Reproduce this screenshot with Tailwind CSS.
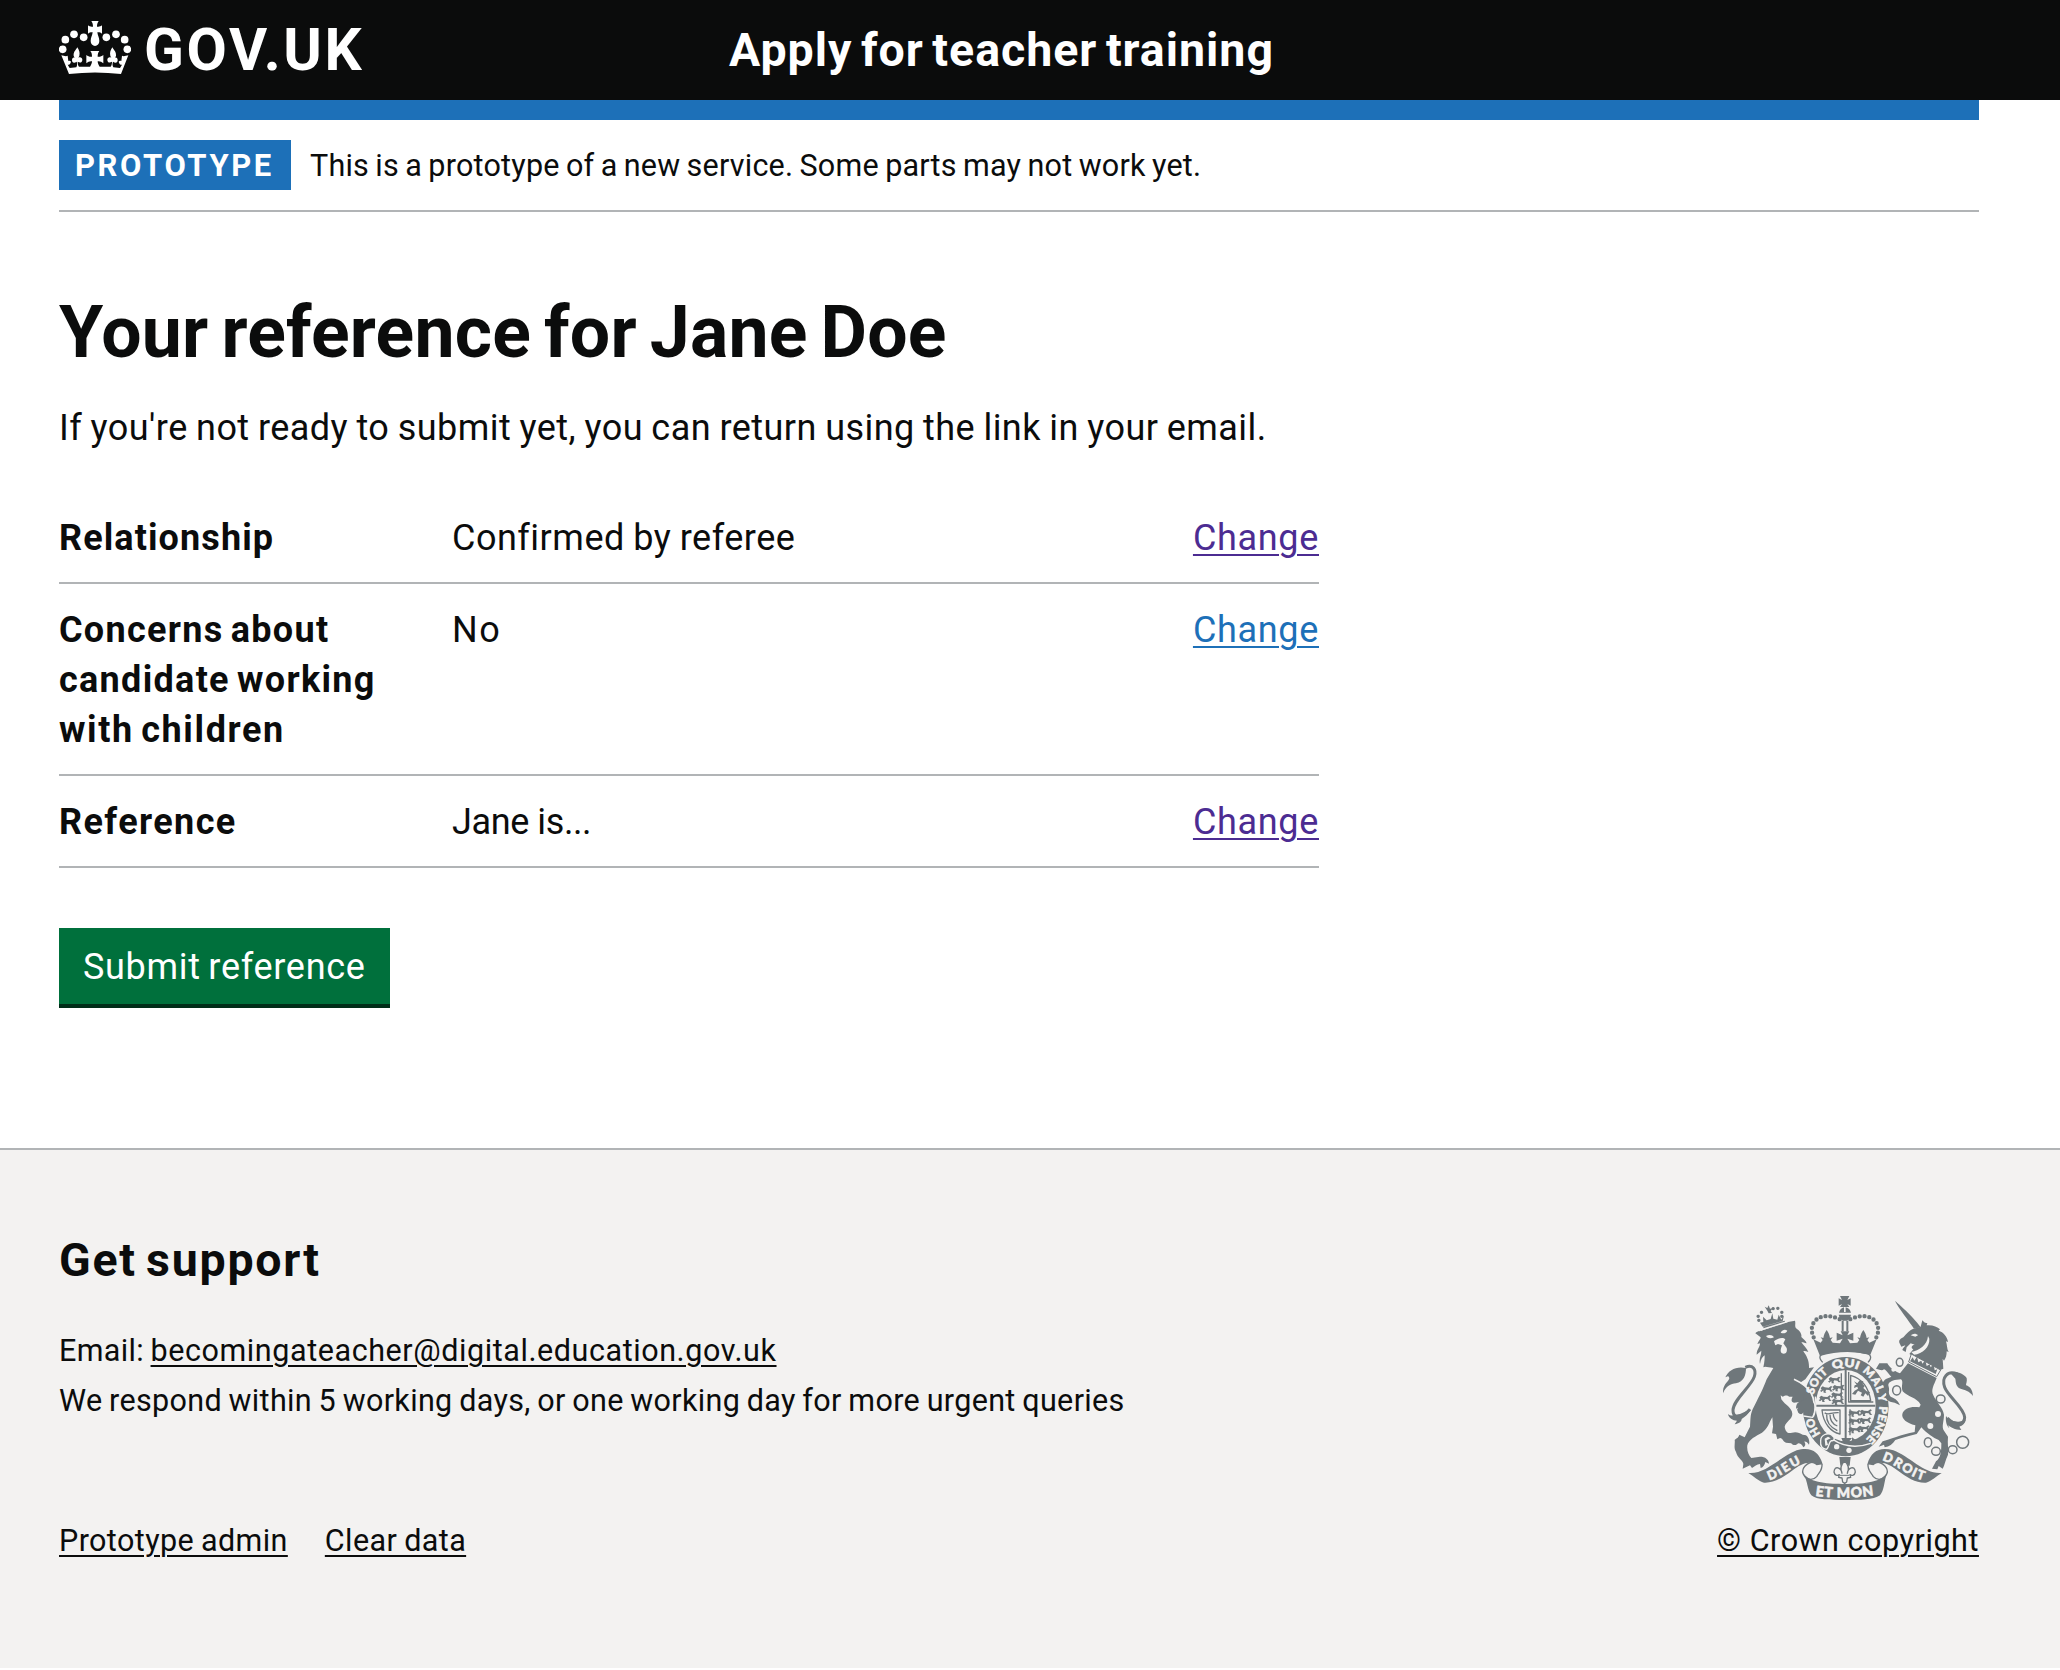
<!DOCTYPE html>
<html lang="en">
<head>
<meta charset="utf-8">
<title>Your reference for Jane Doe</title>
<script src="https://cdn.jsdelivr.net/npm/@tailwindcss/browser@4"></script>
</head>
<body class="bg-white text-[#0b0c0c] font-['Roboto',sans-serif] text-[36px] leading-[50px] min-h-[1670px] overflow-x-hidden">

<header class="bg-[#0b0c0c] text-white h-[100px] pl-[59px] flex">
  <a class="flex w-[670px] h-[100px]">
    <svg class="w-[72px] h-[54px] mt-[20px]" viewBox="57 60 216 162" fill="#fff">
      <circle cx="68" cy="148" r="11.5"/><circle cx="76" cy="119" r="11.5"/><circle cx="102" cy="103" r="11.5"/><circle cx="131" cy="112" r="11.5"/>
      <circle cx="199" cy="112" r="11.5"/><circle cx="228" cy="103" r="11.5"/><circle cx="254" cy="119" r="11.5"/><circle cx="262" cy="148" r="11.5"/>
      <path d="M154 63h22c-4 6-5 11-5 17 6 1 10 0 15-4v25c-5-4-9-5-14-4 1 10 6 16 6 26a13 15 0 0 1-26 0c0-10 5-16 6-26-5-1-9 0-14 4V76c5 4 9 5 15 4 0-6-1-11-5-17z"/>
      <path d="M65 166l14 3 5-2 2 16c4-2 6-1 8 2-2 8-7 10-10 9l6 10 20-2c3-6 3-11 1-17-8 6-14 3-14-5 0-6 4-9 8-7l-3-5c-1-12 5-16 11-26 6 10 8 15 6 26l-3 5c6-3 12 0 12 6 0 8-6 11-14 6 0 6 1 11 4 15h33c4-6 6-11 6-16-6-1-12 1-17 6v-25c5 4 11 6 17 5 0-7-1-12-5-17h27c-4 5-5 10-5 17 6 1 12-1 17-5v25c-5-5-11-7-17-6 0 5 2 10 6 16h33c3-4 4-9 4-15-8 5-14 2-14-6 0-6 6-9 12-6l-3-5c-2-11 0-16 6-26 6 10 12 14 11 26l-3 5c4-2 8 1 8 7 0 8-6 11-14 5-2 6-2 11 1 17l20 2 6-10c-3 1-8-1-10-9 2-3 4-4 8-2l2-16 5 2 14-3-22 56q-78-9-156 0z" transform="translate(-1 0)"/>
    </svg>
    <span class="text-[58.5px] font-bold leading-[100px] tracking-[2.7px] ml-[13px]">GOV.UK</span>
  </a>
  <span class="text-[46.5px] font-bold leading-[100px] tracking-[0.98px] [word-spacing:-4px] whitespace-nowrap">Apply for teacher training</span>
</header>

<div class="mx-[59px] w-[1920px]">
  <div class="h-[20px] bg-[#1d70b8]"></div>
  <div class="flex pt-[20px] pb-[20px] border-b-2 border-[#b1b4b6]">
    <strong class="bg-[#1d70b8] text-white w-[232px] h-[50px] pl-[16px] text-[31px] leading-[52px] font-bold tracking-[2.6px]">PROTOTYPE</strong>
    <span class="ml-[19px] h-[50px] leading-[52px] text-[30.5px] tracking-[0.22px] [word-spacing:-1.5px]">This is a prototype of a new service. Some parts may not work yet.</span>
  </div>

  <main class="w-[1260px] pt-[71px] h-[936px]">
    <h1 class="text-[71.5px] leading-[100px] font-bold tracking-[0.22px] [word-spacing:-5px] whitespace-nowrap">Your reference for Jane Doe</h1>
    <p class="mt-[20px] tracking-[0.45px] [word-spacing:-1px] whitespace-nowrap">If you're not ready to submit yet, you can return using the link in your email.</p>
    <dl class="mt-[39px]">
      <div class="flex pt-[21px] pb-[19px] border-b-2 border-[#b1b4b6]">
        <dt class="w-[393px] font-bold tracking-[1.1px]">Relationship</dt>
        <dd class="flex-1 tracking-[0.5px] [word-spacing:-1px]">Confirmed by referee</dd>
        <dd><a class="text-[#4c2c92] tracking-[0.67px] underline decoration-2 underline-offset-[4px]">Change</a></dd>
      </div>
      <div class="flex pt-[21px] pb-[19px] border-b-2 border-[#b1b4b6]">
        <dt class="w-[393px] font-bold tracking-[1.3px] [word-spacing:-3px]">Concerns about<br>candidate working<br><span class="tracking-[1.6px]">with children</span></dt>
        <dd class="flex-1 tracking-[1.5px]">No</dd>
        <dd><a class="text-[#1d70b8] tracking-[0.67px] underline decoration-2 underline-offset-[4px]">Change</a></dd>
      </div>
      <div class="flex pt-[21px] pb-[19px] border-b-2 border-[#b1b4b6]">
        <dt class="w-[393px] font-bold tracking-[1.4px]">Reference</dt>
        <dd class="flex-1 tracking-[-0.4px]">Jane is...</dd>
        <dd><a class="text-[#4c2c92] tracking-[0.67px] underline decoration-2 underline-offset-[4px]">Change</a></dd>
      </div>
    </dl>
    <button class="mt-[60px] block w-[331px] h-[80px] bg-[#00703c] border-b-4 border-[#002d18] text-white text-left pl-[24px] pt-[2px] leading-[74px] tracking-[0.7px] [word-spacing:-2px] whitespace-nowrap">Submit reference</button>
  </main>
</div>

<footer class="bg-[#f3f2f1] border-t-2 border-[#b1b4b6] h-[520px] text-[30.5px]">
  <div class="mx-[59px] w-[1920px] pt-[80px] flex justify-between">
    <div>
      <h2 class="text-[46.5px] leading-[60px] font-bold tracking-[1.75px] [word-spacing:-4px]">Get support</h2>
      <p class="mt-[36px] tracking-[0.34px] [word-spacing:-1.3px]">Email: <a class="tracking-[0.58px] underline decoration-2 underline-offset-[4px]">becomingateacher@digital.education.gov.uk</a><br>We respond within 5 working days, or one working day for more urgent queries</p>
      <div class="mt-[90px] flex gap-[37px]">
        <a class="tracking-[0.4px] [word-spacing:-1px] underline decoration-2 underline-offset-[4px]">Prototype admin</a>
        <a class="tracking-[0.4px] [word-spacing:-1px] underline decoration-2 underline-offset-[4px]">Clear data</a>
      </div>
    </div>
    <div class="pt-[65px] flex flex-col items-center w-[262px]">
      <svg class="w-[250px] h-[206px]" viewBox="69 45 750 618" fill="#6f777b" stroke-linejoin="round">
        <defs>
          <path id="garter" d="M437 501A101 120 0 0 1 437 261A101 120 0 0 1 437 501"/>
          <path id="dieu" d="M208 601C246 589 272 562 316 545"/>
          <path id="droit" d="M546 541C590 552 620 590 676 602"/>
          <path id="etmon" d="M346 647Q435 660 528 645"/>
          <g id="leopard"><path d="M0 6l6-5 6 3 12 1 7-5 5 3-5 3 1 6 5 4-7 1-4-5-9-1-3 5 3 4-8 0-1-7-6 5-4-4 5-2z"/></g>
        </defs>

        <!-- lion: tail, body, crown -->
        <path d="M136 262C158 252 170 268 163 290C153 320 101 358 99 390C98 414 122 420 150 388" fill="none" stroke="#6f777b" stroke-width="9"/>
        <path d="M69 340C67 312 88 304 88 294C84 284 80 292 76 292C86 270 108 258 138 264C138 285 132 305 108 310C92 312 78 318 69 340z"/>
        <path d="M84 402C96 412 110 402 120 402L152 388C146 402 134 412 125 417C125 426 116 430 104 433L111 422C98 422 86 414 84 402z"/>
        <path d="M166 160C174 150 182 156 190 150L264 126L285 122C288 132 282 140 290 146C300 152 306 162 304 171C310 178 318 182 320 190C312 188 306 186 304 187C312 198 320 204 325 216C318 213 312 212 310 214C320 228 328 242 327 264L342 262L316 298L300 308C312 316 328 328 334 342C346 362 346 388 339 407C331 402 330 394 326 392C328 400 324 406 316 404L314 392L306 402C298 402 294 396 292 388L300 380L288 386C288 374 292 368 298 366L282 368C272 366 274 356 278 350L268 350C260 344 256 346 248 350L242 346L244 358C256 376 276 382 277 402C277 418 258 424 254 440C256 454 262 462 276 458C288 454 298 458 308 464L318 466C326 472 330 484 327 494C322 488 318 484 313 485C318 492 316 498 310 502C306 494 302 490 294 490C290 498 276 496 274 490L258 488C246 482 250 476 240 474L232 478L228 462L216 460L219 440L217 412C206 430 204 446 186 458C168 468 146 478 142 496C140 514 146 526 154 534L180 530C196 530 206 538 207 551L196 546C194 554 190 562 182 564L180 552C170 552 164 560 156 564L150 556L128 566L130 552C130 542 112 534 108 516C100 504 106 490 104 480C108 474 114 476 118 464L134 472L150 440C152 420 150 406 158 388C172 360 190 326 200 298L220 264C204 262 196 258 190 262C194 246 194 234 194 226C188 230 182 238 180 252C176 236 184 226 184 212L170 224C170 208 180 202 180 190L172 192C176 182 182 178 182 172z"/>
        <path d="M190 140L254 122L256 130L191 148zM176 116a5 5 0 1 0 1 0zM174 104a5 5 0 1 0 1 0zM184 92a5 5 0 1 0 1 0zM219 81a5 5 0 1 0 1 0zM233 80a5 5 0 1 0 1 0zM245 92a5 5 0 1 0 1 0zM245 104a5 5 0 1 0 1 0zM180 128l8 12 60-17 4-16-8 12-8-15-4 15-12-3-3-16-5 17-12 4-11-11 1 16z"/>
        <path d="M194 80l8 4 4-8 4 10 8-1-6 8 4 6-10 1-4-8z"/>
        <path fill="#f3f2f1" d="M198 168C208 164 216 164 222 172C212 176 204 176 198 168zM242 158C248 148 256 148 262 152C258 160 250 162 242 158zM222 184C232 176 248 170 256 178L250 190L260 204C264 220 252 224 246 220C238 214 244 204 246 196L234 192L226 196zM185 146L262 123L263 127L187 151z"/>

        <!-- central crown -->
        <path d="M420 48h28l-6 12 10-5v22l-10-5 6 9h-28l6-9-10 5V55l10 5zM417 98C420 88 424 84 432 82V96h5V82C446 84 450 88 453 98zM416 104h37C451 118 444 122 435 122S419 118 416 104zM425 122h6v32h-6zM439 122h6v32h-6z"/>
        <path fill="none" stroke="#6f777b" stroke-width="13" stroke-linecap="round" stroke-dasharray="0 14.6" d="M341 172C320 128 360 90 420 118M529 172C550 128 510 90 450 118"/>
        <path transform="translate(-10 0)" d="M350 178l22 10 6-8-6-8 8 2c2-10 4-16 10-24 6 8 8 14 10 24l8-2-6 8 6 8 22 2 8-14-18 6v-24l18 8-6-12h26l-6 12 18-8v24l-18-6 8 14 22-2 6-8-6-8 8 2c2-10 4-16 10-24 6 8 8 14 10 24l8-2-6 8 6 8 22-10-19 46Q445 206 370 228z"/>
        <path fill="none" stroke="#6f777b" stroke-width="4" d="M368 247C352 230 362 222 374 220Q435 205 496 220C512 222 518 232 504 247"/>

        <!-- garter and quartered shield -->
        <ellipse cx="437" cy="380" rx="129" ry="149"/>
        <path fill="none" stroke="#f3f2f1" stroke-width="5" d="M282 298C330 320 352 350 340 410"/>
        <ellipse cx="437" cy="377" rx="90" ry="107" fill="#f3f2f1"/>
        <path d="M434 270h6v210h-6zM347 374h179v6H347z"/>
        <g fill="none" stroke="#6f777b" stroke-width="4">
          <path d="M446 276V366H520M452 286C486 296 506 322 512 362H452z"/>
          <path d="M366 390H420V462C392 456 370 430 366 390zM374 398C384 408 394 396 416 398M380 404C378 430 396 444 412 452M390 404C390 424 402 434 412 438M400 402C400 416 406 420 412 424"/>
          <path d="M424 280V366M450 388V466"/>
        </g>
        <path d="M462 304l10 6 6-8 12 2-2 8 6 6-4 6 10 10 10 2-6 12-8-8-6 10-8-4 4-8-12-6-8 12-10-2 8-10 10-6-2-6-10 4 2-8 6-2z"/>
        <use href="#leopard" x="386" y="290"/><use href="#leopard" x="362" y="318"/><use href="#leopard" x="398" y="314"/><use href="#leopard" x="358" y="346"/><use href="#leopard" x="394" y="336"/><use href="#leopard" x="396" y="355"/>
        <use href="#leopard" x="446" y="390"/><use href="#leopard" x="480" y="388"/><use href="#leopard" x="446" y="414"/><use href="#leopard" x="478" y="412"/><use href="#leopard" x="446" y="440"/><use href="#leopard" x="474" y="436"/>
        <path d="M424 474h32l-12 14h-14zM456 472l14 10-14 12z"/>
        <path fill="none" stroke="#f3f2f1" stroke-width="4" d="M398 478Q450 512 512 490"/>
        <path d="M362 482C362 464 384 456 396 466C408 474 402 484 394 482C386 486 388 500 380 508C368 508 360 500 362 482z" stroke="#f3f2f1" stroke-width="4"/>
        <path fill="#f3f2f1" d="M374 476l10-6 8 5-12 6 4 14-8 2z"/>
        <circle cx="410" cy="500" r="8" fill="#f3f2f1"/><circle cx="447" cy="511" r="8" fill="#f3f2f1"/>
        <g fill="#f3f2f1" stroke="#f3f2f1" stroke-width="1.6" font-family="Lato" font-weight="900" font-size="34">
          <text><textPath href="#garter" startOffset="88" textLength="54">HO</textPath></text>
          <text><textPath href="#garter" startOffset="211" textLength="80">SOIT</textPath></text>
          <text><textPath href="#garter" startOffset="309" textLength="76" lengthAdjust="spacingAndGlyphs">QUI</textPath></text>
          <text><textPath href="#garter" startOffset="399" textLength="80">MAL</textPath></text>
          <text><textPath href="#garter" startOffset="484">Y</textPath></text>
          <text><textPath href="#garter" startOffset="519" textLength="110" lengthAdjust="spacingAndGlyphs">PENSE</textPath></text>
        </g>
        <path d="M292 388L300 366L326 352L342 372C344 386 342 398 338 407L326 392C328 402 322 408 314 402L310 392L304 403C296 402 292 396 292 388z"/>
        <path fill="none" stroke="#f3f2f1" stroke-width="4" d="M346 350C350 380 346 400 338 412L310 408"/>

        <!-- unicorn -->
        <path fill="none" stroke="#6f777b" stroke-width="9" d="M772 282C742 270 724 292 734 322C744 350 792 382 794 412C794 436 764 438 742 414"/>
        <path d="M750 278C770 272 792 282 800 294C802 304 798 310 798 316C806 318 818 326 819 348C808 332 794 330 782 326C766 320 768 306 766 296zM738 408C748 424 776 430 796 420C794 436 782 438 778 440L784 450C764 450 752 442 744 436L748 444C740 438 736 424 738 408z"/>
        <path d="M585 63C600 74 650 122 662 142L642 146C626 122 598 88 585 63z"/>
        <path d="M598 188C596 180 602 176 610 172C620 160 630 150 640 146L662 140L667 121C672 126 674 130 682 129L680 136C696 134 712 140 720 148L716 152C730 156 742 170 744 186L738 184C742 196 740 206 746 216L740 214C740 226 738 234 732 242L728 236L730 266L716 272L704 264L628 222L640 208C632 204 634 196 644 194L632 190L620 202L617 216L607 210C608 204 614 202 616 196L604 200z"/>
        <path fill="#f3f2f1" d="M634 216C656 212 682 196 684 168L688 176C690 200 668 222 642 224zM632 166C640 160 648 160 654 166L646 170z"/>
        <path d="M634 222L722 270L710 290L626 246z" fill="#f3f2f1" stroke="#6f777b" stroke-width="3"/>
        <path d="M630 244l8-12 5 10 8-12 4 17 9-5 3 9 9-10 4 17 9-5 3 9 9-9 3 18 8-3-5 14z"/>
        <path d="M624 250L710 294C702 316 692 328 700 346C710 368 728 382 732 404C732 424 724 440 732 452L744 470C742 490 746 508 744 524C736 540 734 556 728 566L716 558L712 568L696 566L708 544C722 534 724 516 724 490L716 480C700 474 680 460 664 442L650 462C626 468 604 474 586 480C578 492 568 500 554 502L552 494L536 500L548 484C568 478 604 464 644 456L646 436C620 430 604 416 607 402C612 384 634 378 658 382L662 374C650 352 622 350 608 334C602 318 612 306 603 298L584 300C572 304 562 308 566 320C570 332 562 336 572 350C580 354 594 358 600 376L584 368C564 366 552 354 560 344L548 310C552 296 562 296 574 290C566 284 562 272 552 268C544 274 540 268 528 266L538 250L562 250C568 262 584 274 600 280z"/>
        <g fill="#f3f2f1" stroke="#6f777b" stroke-width="4.5">
          <ellipse cx="599" cy="247" rx="10" ry="12"/><ellipse cx="590" cy="331" rx="12" ry="14"/><ellipse cx="722" cy="357" rx="13" ry="12"/>
          <ellipse cx="684" cy="487" rx="11" ry="14"/><ellipse cx="708" cy="514" rx="13" ry="12"/><ellipse cx="758" cy="509" rx="13" ry="12"/><circle cx="788" cy="487" r="18" fill="none"/>
        </g>
        <circle cx="714" cy="402" r="9" fill="#f3f2f1"/><circle cx="691" cy="438" r="9" fill="#f3f2f1"/><circle cx="580" cy="269" r="6" fill="#f3f2f1"/>

        <!-- motto scroll -->
        <path d="M145 579C196 584 240 530 290 511C330 500 356 512 368 553L350 556C328 540 304 552 276 572C250 592 220 610 192 608C176 604 160 588 145 579z"/>
        <path d="M725 579C674 584 630 530 580 511C540 500 514 512 502 553L520 556C542 540 566 552 594 572C620 592 650 610 678 608C694 604 710 588 725 579z"/>
        <path fill="none" stroke="#6f777b" stroke-width="4" d="M338 546C312 552 302 572 312 586C318 600 340 602 350 590C356 578 368 572 366 552M532 546C558 552 568 572 558 586C552 600 530 602 520 590C514 578 502 572 504 552"/>
        <path d="M310 580C330 610 390 612 435 612S540 610 560 580C552 610 552 632 540 646C520 660 480 660 435 660S350 660 334 646C322 632 324 606 310 580z"/>
        <g fill="#f3f2f1" stroke="#f3f2f1" stroke-width="1.6" font-family="Lato" font-weight="900" font-size="42">
          <text font-size="38"><textPath href="#dieu" textLength="108">DIEU</textPath></text>
          <text font-size="38"><textPath href="#droit" textLength="138">DROIT</textPath></text>
          <text><textPath href="#etmon" textLength="176">ET MON</textPath></text>
        </g>
        <path d="M418 531h34l-3 26h-28z"/>
        <path fill="#f3f2f1" stroke="#6f777b" stroke-width="4" d="M434 543C446 554 448 566 442 580C444 564 464 554 466 576C464 586 456 588 450 584L452 592L442 594L440 606L434 610L428 606L426 594L416 592L418 584C412 588 404 586 402 576C404 554 424 564 426 580C420 566 422 554 434 543z"/>
        <path fill="none" stroke="#6f777b" stroke-width="3" d="M420 586H448"/>
      </svg>
      <a class="mt-[15px] tracking-[0.55px] underline decoration-2 underline-offset-[4px] whitespace-nowrap">© Crown copyright</a>
    </div>
  </div>
</footer>
</body>
</html>
